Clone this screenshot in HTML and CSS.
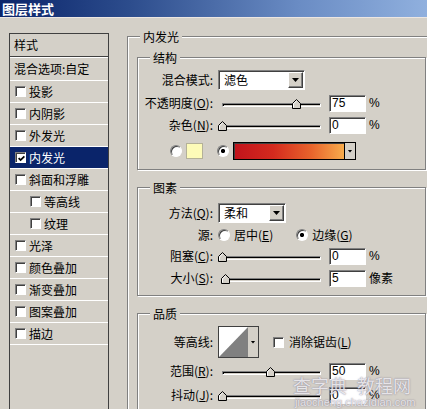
FILE: index.html
```html
<!DOCTYPE html>
<html lang="zh-CN">
<head>
<meta charset="utf-8">
<title>图层样式</title>
<link rel="stylesheet" href="styles.css">
</head>
<body>
<div class="window">
  <div class="titlebar">图层样式</div>
  <div class="client">
    <div class="stylelist">
      <div class="list-head">样式</div>
      <div class="list-blend">混合选项:自定</div>
      <div class="list-item"><span class="cb"></span>投影</div>
      <div class="list-item"><span class="cb"></span>内阴影</div>
      <div class="list-item"><span class="cb"></span>外发光</div>
      <div class="list-item selected"><span class="cb"><svg width="7" height="7" viewBox="0 0 7 7"><path d="M0.6 3.1L2.6 5.1L6.4 1.3" fill="none" stroke="#000" stroke-width="1.8"/></svg></span>内发光</div>
      <div class="list-item"><span class="cb"></span>斜面和浮雕</div>
      <div class="list-item sub"><span class="cb"></span>等高线</div>
      <div class="list-item sub"><span class="cb"></span>纹理</div>
      <div class="list-item"><span class="cb"></span>光泽</div>
      <div class="list-item"><span class="cb"></span>颜色叠加</div>
      <div class="list-item"><span class="cb"></span>渐变叠加</div>
      <div class="list-item"><span class="cb"></span>图案叠加</div>
      <div class="list-item"><span class="cb"></span>描边</div>
    </div>

    <div class="effect">
      <div class="group-title outer-title">内发光</div>

      <div class="group g-struct">
        <div class="group-title">结构</div>
        <div class="row r-select r-first12">
          <span class="lbl">混合模式:</span>
          <div class="select s-mode"><span class="sel-text">滤色</span><span class="sel-btn"></span></div>
        </div>
        <div class="row r-gap4">
          <span class="lbl">不透明度(<u>O</u>):</span>
          <div class="slider"><div class="track"></div><svg class="thumb" style="left:74px" width="9" height="10" viewBox="0 0 9 10"><path d="M0.5 9.5V4.5L4.5 0.5L8.5 4.5V9.5Z" fill="#d4d0c8" stroke="#000"/><path d="M1.5 8.5V4.9L4.5 1.9" fill="none" stroke="#fff"/></svg></div>
          <div class="num">75</div><span class="unit">%</span>
        </div>
        <div class="row r-gap4">
          <span class="lbl">杂色(<u>N</u>):</span>
          <div class="slider"><div class="track"></div><svg class="thumb" style="left:0px" width="9" height="10" viewBox="0 0 9 10"><path d="M0.5 9.5V4.5L4.5 0.5L8.5 4.5V9.5Z" fill="#d4d0c8" stroke="#000"/><path d="M1.5 8.5V4.9L4.5 1.9" fill="none" stroke="#fff"/></svg></div>
          <div class="num">0</div><span class="unit">%</span>
        </div>
        <div class="row r-color">
          <span class="radio"></span>
          <span class="swatch"></span>
          <span class="radio on r-second"></span>
          <div class="grad"><span class="grad-fill"></span><span class="grad-btn"></span></div>
        </div>
      </div>

      <div class="group g-elem">
        <div class="group-title">图素</div>
        <div class="row r-select r-first15">
          <span class="lbl">方法(<u>Q</u>):</span>
          <div class="select s-method"><span class="sel-text">柔和</span><span class="sel-btn"></span></div>
        </div>
        <div class="row r-source">
          <span class="lbl">源:</span>
          <span class="radio"></span><span class="opt">居中(<u>E</u>)</span>
          <span class="radio on r-edge"></span><span class="opt">边缘(<u>G</u>)</span>
        </div>
        <div class="row r-gap5">
          <span class="lbl">阻塞(<u>C</u>):</span>
          <div class="slider"><div class="track"></div><svg class="thumb" style="left:0px" width="9" height="10" viewBox="0 0 9 10"><path d="M0.5 9.5V4.5L4.5 0.5L8.5 4.5V9.5Z" fill="#d4d0c8" stroke="#000"/><path d="M1.5 8.5V4.9L4.5 1.9" fill="none" stroke="#fff"/></svg></div>
          <div class="num">0</div><span class="unit">%</span>
        </div>
        <div class="row r-gap4">
          <span class="lbl">大小(<u>S</u>):</span>
          <div class="slider"><div class="track"></div><svg class="thumb" style="left:3px" width="9" height="10" viewBox="0 0 9 10"><path d="M0.5 9.5V4.5L4.5 0.5L8.5 4.5V9.5Z" fill="#d4d0c8" stroke="#000"/><path d="M1.5 8.5V4.9L4.5 1.9" fill="none" stroke="#fff"/></svg></div>
          <div class="num">5</div><span class="unit cjk">像素</span>
        </div>
      </div>

      <div class="group g-quality">
        <div class="group-title">品质</div>
        <div class="row r-contour r-first12">
          <span class="lbl">等高线:</span>
          <div class="contour"><svg width="29" height="30" viewBox="0 0 29 30"><rect width="29" height="30" fill="#fff"/><path d="M0 30L29 0V30Z" fill="#808080"/></svg><span class="contour-btn"></span></div>
          <span class="cb cb-aa"></span><span class="opt">消除锯齿(<u>L</u>)</span>
        </div>
        <div class="row r-gap4">
          <span class="lbl">范围(<u>R</u>):</span>
          <div class="slider"><div class="track"></div><svg class="thumb" style="left:48px" width="9" height="10" viewBox="0 0 9 10"><path d="M0.5 9.5V4.5L4.5 0.5L8.5 4.5V9.5Z" fill="#d4d0c8" stroke="#000"/><path d="M1.5 8.5V4.9L4.5 1.9" fill="none" stroke="#fff"/></svg></div>
          <div class="num">50</div><span class="unit">%</span>
        </div>
        <div class="row r-gap6">
          <span class="lbl">抖动(<u>J</u>):</span>
          <div class="slider"><div class="track"></div><svg class="thumb" style="left:0px" width="9" height="10" viewBox="0 0 9 10"><path d="M0.5 9.5V4.5L4.5 0.5L8.5 4.5V9.5Z" fill="#d4d0c8" stroke="#000"/><path d="M1.5 8.5V4.9L4.5 1.9" fill="none" stroke="#fff"/></svg></div>
          <div class="num">0</div><span class="unit">%</span>
        </div>
      </div>
    </div>
  </div>

  <div class="watermark">
    <div class="wm-big">查字典 教程网</div>
    <div class="wm-small">jiaocheng.chazidian.com</div>
  </div>
</div>
</body>
</html>
```
FILE: styles.css
```css
* { box-sizing: border-box; }
html, body { margin: 0; padding: 0; }
body {
  width: 427px;
  height: 409px;
  overflow: hidden;
  background: #d4d0c8;
  font-family: "Noto Sans CJK SC", "Noto Sans", sans-serif;
  font-size: 12px;
  line-height: 14px;
  color: #000;
}
u { text-decoration: underline; text-underline-offset: 1px; }

.window {
  position: relative;
  width: 427px;
  height: 409px;
  overflow: hidden;
}

.titlebar {
  height: 18px;
  line-height: 17px;
  padding-left: 2px;
  border-bottom: 1px solid #ece6e2;
  background: linear-gradient(90deg, #0a246a 0%, #2c4c8c 30%, #6a8cc4 70%, #90b0de 100%);
  color: #fff;
  font-weight: bold;
  font-size: 13px;
  white-space: nowrap;
}

.client {
  display: flex;
  align-items: flex-start;
}

/* left style list */
.stylelist {
  flex: none;
  width: 100px;
  height: 400px;
  margin: 15px 0 0 9px;
  border: 1px solid #404040;
  border-bottom: none;
}
.list-head {
  height: 23px;
  line-height: 22px;
  padding-left: 4px;
  border-bottom: 1px solid #404040;
}
.list-blend {
  height: 24px;
  line-height: 22px;
  padding-left: 4px;
  border-top: 1px solid #fff;
  border-bottom: 1px solid #fff;
  white-space: nowrap;
}
.list-item {
  height: 22px;
  display: flex;
  align-items: center;
  padding-left: 5px;
  border-bottom: 1px solid #fff;
  white-space: nowrap;
}
.list-item.sub { padding-left: 20px; }
.list-item.selected { background: #0a246a; color: #fff; }

.cb {
  flex: none;
  display: flex;
  align-items: center;
  justify-content: center;
  width: 11px;
  height: 11px;
  margin-right: 3px;
  background: #fff;
  border: 1px solid;
  border-color: #808080 #fff #fff #808080;
  box-shadow: inset 1px 1px #404040;
}
.cb svg { display: block; margin: 1px 0 0 1px; }

/* effect panel */
.effect {
  flex: none;
  width: 310px;
  height: 420px;
  margin: 18px 0 0 18px;
  padding: 0 10px 0 9px;
  border: 1px solid #808080;
  box-shadow: inset 1px 1px #fff;
  display: flex;
  flex-direction: column;
}
.group-title {
  align-self: flex-start;
  height: 16px;
  line-height: 16px;
  margin: -8px 0 -8px 12px;
  padding: 0 3px;
  background: #d4d0c8;
  white-space: nowrap;
}
.outer-title { margin-left: 3px; }

.group {
  border: 1px solid #808080;
  box-shadow: inset 1px 1px #fff, 1px 1px #fff;
  display: flex;
  flex-direction: column;
}
.g-struct { margin-top: 20px; padding-bottom: 9px; }
.g-elem { margin-top: 17px; padding-bottom: 8px; }
.g-quality { margin-top: 17px; padding-bottom: 20px; }

.row {
  display: flex;
  align-items: center;
  height: 18px;
  white-space: nowrap;
}
.r-select { height: 20px; }
.r-first12 { margin-top: 12px; }
.r-first15 { margin-top: 15px; }
.r-gap4 { margin-top: 4px; }
.r-gap5 { margin-top: 5px; }
.r-gap6 { margin-top: 6px; }
.r-color { margin-top: 8px; padding-left: 32px; }
.r-source { margin-top: 5px; height: 14px; }
.r-contour { height: 32px; }

.lbl {
  flex: none;
  width: 75px;
  margin-right: 5px;
  text-align: right;
}

/* select */
.select {
  flex: none;
  display: flex;
  align-items: center;
  height: 20px;
  padding: 1px;
  background: #fff;
  border: 1px solid;
  border-color: #808080 #fff #fff #808080;
  box-shadow: inset 1px 1px #404040;
}
.s-mode { width: 87px; }
.s-method { width: 68px; }
.sel-text { padding-left: 4px; }
.sel-btn {
  margin-left: auto;
  width: 15px;
  height: 16px;
  display: flex;
  align-items: center;
  justify-content: center;
  background: #d4d0c8;
  border: 1px solid;
  border-color: #fff #404040 #404040 #fff;
  box-shadow: inset -1px -1px #808080;
}
.sel-btn::after {
  content: "";
  width: 7px;
  height: 4px;
  background: #000;
  clip-path: polygon(0 0, 100% 0, 50% 100%);
}

/* slider */
.slider {
  flex: none;
  position: relative;
  width: 108px;
  height: 10px;
  margin-top: 1px;
  padding: 4px 5px 0 4px;
}
.track {
  height: 4px;
  background: #d4d0c8;
  border-top: 1px solid #808080;
  border-left: 1px solid #808080;
  border-bottom: 1px solid #fff;
  border-right: 1px solid #fff;
  box-shadow: inset 1px 1px #000;
}
.thumb {
  position: absolute;
  top: 0;
  display: block;
}

/* numeric input */
.num {
  flex: none;
  width: 37px;
  height: 17px;
  margin-left: 3px;
  padding-left: 2px;
  line-height: 15px;
  background: #fff;
  border: 1px solid;
  border-color: #808080 #fff #fff #808080;
  box-shadow: inset 1px 1px #404040;
  font-family: "Liberation Sans", Arial, sans-serif;
  font-size: 12px;
}
.unit {
  margin-left: 3px;
  font-family: "Liberation Sans", Arial, sans-serif;
}
.unit.cjk { font-family: "Noto Sans CJK SC", sans-serif; }

/* radios */
.radio {
  flex: none;
  width: 12px;
  height: 12px;
  border-radius: 50%;
  background: #fff;
  border: 1px solid;
  border-color: #808080 #fff #fff #808080;
  box-shadow: inset 1px 1px #404040;
}
.radio.on {
  background: radial-gradient(circle, #000 0, #000 1.8px, #fff 2.4px);
}
.opt { margin-left: 4px; }
.r-edge { margin-left: 23px; }
.r-second { margin-left: 14px; }

/* colour swatch + gradient */
.swatch {
  flex: none;
  width: 17px;
  height: 16px;
  margin-left: 4px;
  background: #fdfbb8;
  border: 1px solid #b4b198;
}
.grad {
  flex: none;
  display: flex;
  width: 123px;
  height: 18px;
  margin-left: 4px;
  border: 1px solid #000;
  box-shadow: inset 1px 1px #404040;
}
.grad-fill {
  flex: 1;
  margin: 1px 0 0 1px;
  background: linear-gradient(90deg, #c2141c 0%, #d42a1e 35%, #e8642c 70%, #f8ac4c 100%);
}
.grad-btn {
  flex: none;
  width: 11px;
  display: flex;
  align-items: center;
  justify-content: center;
  background: #d4d0c8;
  border-left: 1px solid #000;
}
.grad-btn::after {
  content: "";
  width: 5px;
  height: 3px;
  background: #000;
  clip-path: polygon(0 0, 100% 0, 50% 100%);
}

/* contour picker */
.contour {
  flex: none;
  display: flex;
  width: 41px;
  height: 32px;
  border: 1px solid #404040;
}
.contour svg { display: block; }
.contour-btn {
  flex: none;
  width: 10px;
  display: flex;
  align-items: center;
  justify-content: center;
  background: #d4d0c8;
}
.contour-btn::after {
  content: "";
  width: 5px;
  height: 3px;
  background: #000;
  clip-path: polygon(0 0, 100% 0, 50% 100%);
}
.cb-aa { margin-left: 14px; margin-right: 1px; }

/* watermark overlay */
.watermark {
  position: absolute;
  left: 293px;
  top: 374px;
  color: rgba(255, 255, 255, 0.78);
  text-shadow: 0 0 1px rgba(110, 100, 130, 0.7), 0 0 2px rgba(110, 100, 130, 0.4);
  white-space: nowrap;
  pointer-events: none;
}
.wm-big {
  font-size: 18px;
  line-height: 22px;
  word-spacing: 6px;
}
.wm-small {
  font-family: "Liberation Sans", Arial, sans-serif;
  font-size: 11px;
  line-height: 12px;
  margin-left: 2px;
}
```
